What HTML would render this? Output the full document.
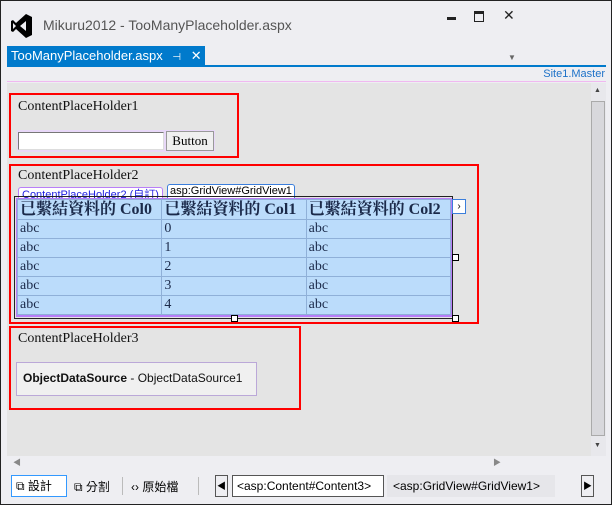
<html><head><style>
body{margin:0;width:612px;height:505px;overflow:hidden;background:#fff;font-family:"Liberation Sans","Noto Sans CJK TC",sans-serif}
#w{position:absolute;left:0;top:0;width:610px;height:503px;border:1px solid #222;background:#eeeef2;overflow:hidden}
.a{position:absolute}
.ser{font-family:"Liberation Serif","Noto Serif CJK SC",serif}
.red{position:absolute;border:2px solid #f00;box-sizing:border-box}
td{border:1px solid #8fb0d8;padding:0 2px;height:19px;line-height:18px;font-size:14px;color:#1b2a4a;white-space:nowrap;overflow:hidden}
</style></head><body><div id="w">
<svg class="a" style="left:10px;top:12px" width="22" height="26" viewBox="0 0 22 26"><path d="M15 1 L21 4 V22 L15 25 L5 16 L2 19 L0 18 V8 L2 7 L5 10 Z M15 8 L9 13 L15 18 Z M2 10 V16 L5 13 Z" fill="#000"/></svg>
<div class="a" style="left:42px;top:16px;font-size:14px;color:#555">Mikuru2012 - TooManyPlaceholder.aspx</div>
<div class="a" style="left:446px;top:16px;width:9px;height:3px;background:#222"></div>
<div class="a" style="left:473px;top:10px;width:8px;height:7px;border:1px solid #222;border-top-width:3px"></div>
<div class="a" style="left:502px;top:6px;font-size:14px;color:#222">✕</div>
<div class="a" style="left:6px;top:45px;width:198px;height:20px;background:#007acc;color:#fff;font-size:13px;line-height:20px;padding-left:4px;box-sizing:border-box;white-space:nowrap">TooManyPlaceholder.aspx <span style="font-size:10px;margin-left:6px">⊣</span> <span style="margin-left:6px">✕</span></div>
<div class="a" style="left:6px;top:64px;width:599px;height:2px;background:#007acc"></div>
<div class="a" style="left:507px;top:52px;font-size:8px;color:#666">▼</div>
<div class="a" style="right:6px;top:67px;font-size:11px;color:#1e72c8">Site1.Master</div>
<div class="a" style="left:6px;top:80px;width:599px;height:1px;background:#f0b8f0"></div>
<div class="a" style="left:6px;top:82px;width:584px;height:373px;background:#e4e4e4"></div>
<div class="a" style="left:590px;top:82px;width:15px;height:373px;background:#e8e8ec"></div>
<div class="a" style="left:590px;top:100px;width:14px;height:335px;background:#d8d8dc;border:1px solid #aaa;box-sizing:border-box"></div>
<div class="a" style="left:593px;top:86px;font-size:7px;color:#444">▲</div>
<div class="a" style="left:593px;top:441px;font-size:7px;color:#444">▼</div>
<div class="red" style="left:8px;top:92px;width:230px;height:65px"></div>
<div class="a ser" style="left:17px;top:98px;font-size:14px;color:#111">ContentPlaceHolder1</div>
<div class="a" style="left:16px;top:129px;width:198px;height:22px;background:#e8d8f8"></div>
<div class="a" style="left:17px;top:131px;width:146px;height:18px;background:#fff;border:1px solid #777;border-right-color:#ddd;border-bottom-color:#ddd;box-sizing:border-box"></div>
<div class="a ser" style="left:165px;top:130px;width:48px;height:20px;background:#f0f0f0;border:1px solid #999;box-sizing:border-box;font-size:13px;text-align:center;line-height:18px">Button</div>
<div class="red" style="left:8px;top:163px;width:470px;height:160px"></div>
<div class="a ser" style="left:17px;top:167px;font-size:14px;color:#111">ContentPlaceHolder2</div>
<div class="a" style="left:17px;top:186px;height:14px;padding:0 3px;border:1px solid #b87ef8;border-bottom:none;border-radius:3px 3px 0 0;background:#fff;color:#2020e0;font-size:11px;line-height:14px">ContentPlaceHolder2 (自訂)</div>
<div class="a" style="left:166px;top:183px;height:13px;padding:0 2px;border:1px solid #3b7edb;border-radius:3px 3px 0 0;background:#fff;font-size:11px;line-height:13px">asp:GridView#GridView1</div>
<div class="a" style="left:13px;top:195px;width:439px;height:123px;border:1px solid #222;box-sizing:border-box"></div>
<div class="a" style="left:15px;top:197px;width:436px;height:119px;border:2px solid #b87ef8;box-sizing:border-box;background:#bbdcfb"></div>
<table class="a ser" style="left:16px;top:198px;border-collapse:collapse;width:434px;table-layout:fixed">
<tr><td style="font-weight:bold;font-size:16px;height:20px">已繫結資料的 Col0</td><td style="font-weight:bold;font-size:16px">已繫結資料的 Col1</td><td style="font-weight:bold;font-size:16px">已繫結資料的 Col2</td></tr>
<tr><td>abc</td><td>0</td><td>abc</td></tr><tr><td>abc</td><td>1</td><td>abc</td></tr><tr><td>abc</td><td>2</td><td>abc</td></tr><tr><td>abc</td><td>3</td><td>abc</td></tr><tr><td>abc</td><td>4</td><td>abc</td></tr></table>
<div class="a" style="left:451px;top:198px;width:12px;height:13px;border:1px solid #3b7edb;background:#fff;font-size:10px;text-align:center;line-height:13px">›</div>
<div class="a" style="left:451px;top:253px;width:5px;height:5px;border:1px solid #000;background:#fff"></div>
<div class="a" style="left:230px;top:314px;width:5px;height:5px;border:1px solid #000;background:#fff"></div>
<div class="a" style="left:451px;top:314px;width:5px;height:5px;border:1px solid #000;background:#fff"></div>
<div class="red" style="left:8px;top:325px;width:292px;height:84px"></div>
<div class="a ser" style="left:17px;top:330px;font-size:14px;color:#111">ContentPlaceHolder3</div>
<div class="a" style="left:15px;top:361px;width:241px;height:34px;background:#f0f0f0;border:1px solid #bba8d8;box-sizing:border-box;font-size:12px;line-height:30px;padding-left:6px;color:#111"><b>ObjectDataSource</b> - ObjectDataSource1</div>
<div class="a" style="left:6px;top:455px;width:584px;height:14px;background:#eeeef2"></div>
<div class="a" style="left:12px;top:456px;font-size:8px;color:#888">◀</div>
<div class="a" style="left:492px;top:456px;font-size:8px;color:#888">▶</div>
<div class="a" style="left:10px;top:474px;width:56px;height:22px;border:1px solid #3399ff;box-sizing:border-box;background:#fff;font-size:12px;line-height:20px;padding-left:4px">⧉ 設計</div>
<div class="a" style="left:73px;top:477px;font-size:12px">⧉ 分割</div>
<div class="a" style="left:121px;top:476px;width:1px;height:18px;background:#bbb"></div>
<div class="a" style="left:130px;top:477px;font-size:12px">‹› 原始檔</div>
<div class="a" style="left:197px;top:476px;width:1px;height:18px;background:#bbb"></div>
<div class="a" style="left:214px;top:474px;width:13px;height:22px;border:1px solid #555;box-sizing:border-box;font-size:9px;line-height:20px;text-align:center">◀</div>
<div class="a" style="left:231px;top:474px;width:152px;height:22px;border:1px solid #555;box-sizing:border-box;background:#fff;font-size:12px;line-height:20px;padding-left:4px">&lt;asp:Content#Content3&gt;</div>
<div class="a" style="left:386px;top:474px;width:162px;height:22px;background:#e6e6ea;font-size:12px;line-height:22px;padding-left:6px">&lt;asp:GridView#GridView1&gt;</div>
<div class="a" style="left:580px;top:474px;width:13px;height:22px;border:1px solid #555;box-sizing:border-box;font-size:9px;line-height:20px;text-align:center">▶</div>
</div></body></html>
